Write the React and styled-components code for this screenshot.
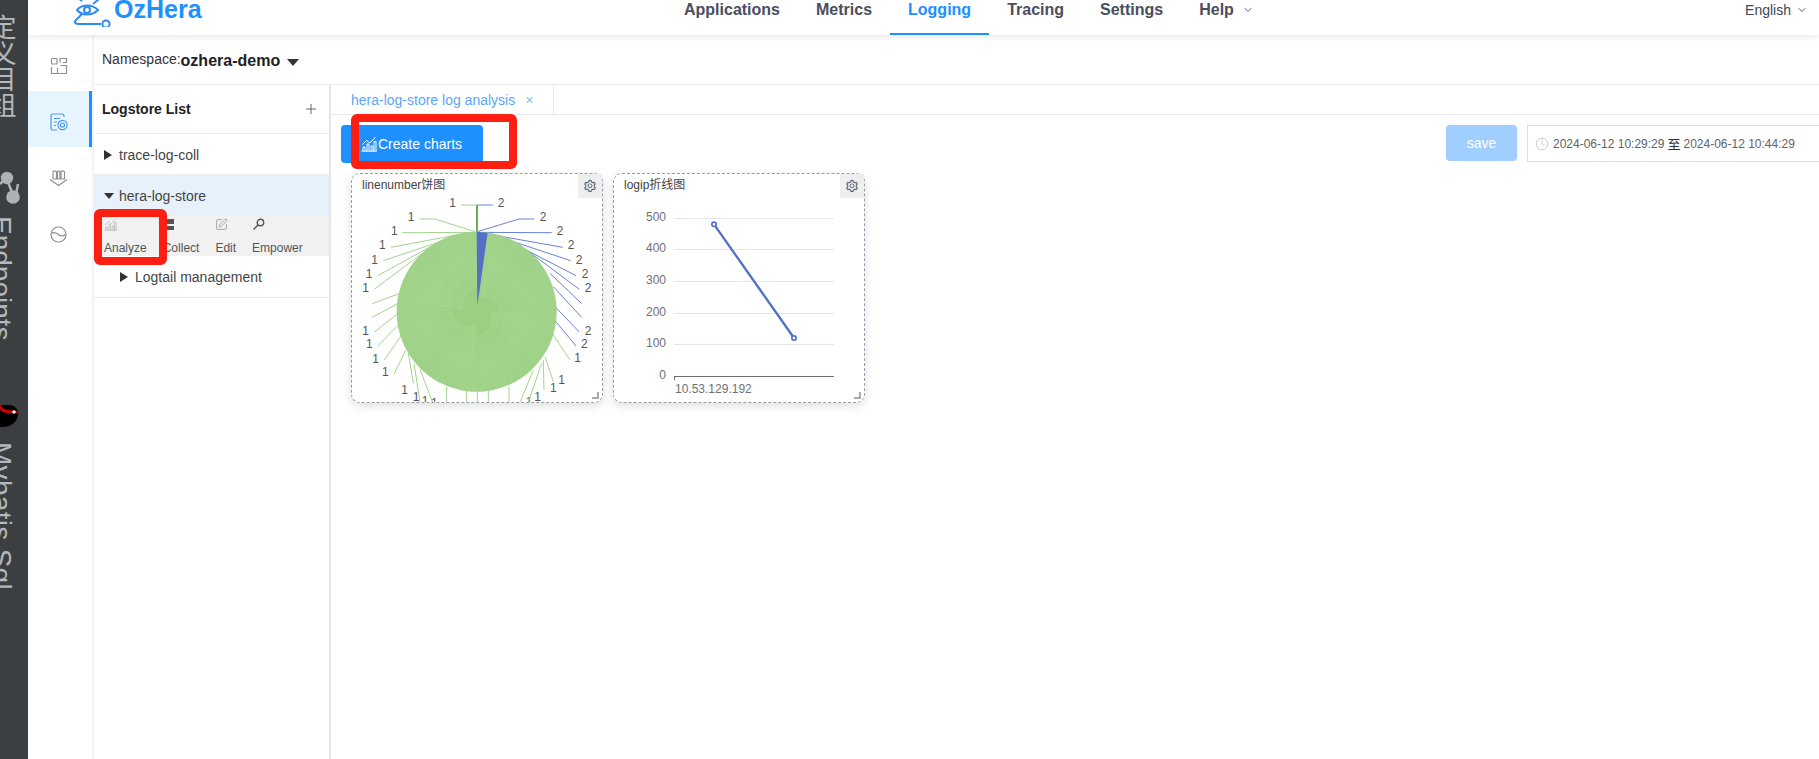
import styled, { createGlobalStyle } from "styled-components";
import { ChevronDown, Clock, Plus, SquarePen } from "lucide-react";
import { AiOutlineSetting } from "react-icons/ai";

const GlobalStyle = createGlobalStyle`
  html, body {
    margin: 0;
    height: 100%;
    overflow: hidden;
    background: #fff;
    font-family: "Liberation Sans", "Noto Sans CJK SC", sans-serif;
  }
`;

const Page = styled.div`
  display: flex;
  width: 1819px;
  height: 759px;
  overflow: hidden;
`;

const Strip = styled.div`
  flex: 0 0 28px;
  display: flex;
  flex-direction: column;
  align-items: flex-start;
  background: #3c3f41;
  overflow: hidden;
`;

const StripLabel = styled.div`
  writing-mode: vertical-rl;
  white-space: nowrap;
  font-size: ${(p) => p.$size || 28}px;
  letter-spacing: ${(p) => p.$spacing || 0}px;
  line-height: 28px;
  height: ${(p) => p.$height}px;
  margin-left: -13px;
  margin-top: ${(p) => p.$top}px;
  color: #b4b8bb;
`;

const Main = styled.div`
  flex: 1;
  display: flex;
  flex-direction: column;
  min-width: 0;
`;

const Header = styled.header`
  flex: 0 0 35px;
  position: relative;
  z-index: 2;
  display: flex;
  align-items: flex-start;
  background: #fff;
  box-shadow: 0 2px 6px rgba(0, 0, 0, 0.09);
`;

const Logo = styled.div`
  flex: 0 0 638px;
  display: flex;
  padding-left: 46px;
  box-sizing: border-box;
  height: 35px;
  overflow: hidden;
`;

const LogoText = styled.span`
  font-size: 25px;
  line-height: 19px;
  font-weight: 700;
  color: #1e90ff;
`;

const Nav = styled.nav`
  display: flex;
`;

const NavItem = styled.a`
  display: flex;
  align-items: flex-start;
  gap: 8px;
  height: 35px;
  box-sizing: border-box;
  padding: 0 18px;
  font-size: 16px;
  line-height: 19px;
  font-weight: 700;
  color: ${(p) => (p.$active ? "#1e90ff" : "#4a4e5e")};
  border-bottom: 2px solid ${(p) => (p.$active ? "#1e90ff" : "transparent")};
  svg {
    margin-top: 4px;
  }
`;

const Lang = styled.div`
  margin-left: auto;
  display: flex;
  align-items: center;
  gap: 5px;
  height: 20px;
  padding-right: 11px;
  font-size: 14px;
  color: #3f4656;
`;

const Body = styled.div`
  flex: 1;
  display: flex;
  min-height: 0;
`;

const Rail = styled.aside`
  flex: 0 0 66px;
  box-sizing: border-box;
  border-right: 2px solid #f3f3f3;
`;

const RailItem = styled.div`
  height: 56px;
  box-sizing: border-box;
  padding-top: 6px;
  display: flex;
  align-items: center;
  justify-content: center;
  background: ${(p) => (p.$active ? "#e6f5ff" : "transparent")};
  border-right: 3px solid ${(p) => (p.$active ? "#1e90ff" : "transparent")};
`;

const Content = styled.div`
  flex: 1;
  display: flex;
  flex-direction: column;
  min-width: 0;
`;

const NamespaceBar = styled.div`
  flex: 0 0 50px;
  box-sizing: border-box;
  display: flex;
  align-items: center;
  padding: 3px 0 0 8px;
  border-bottom: 1px solid #e8e8ee;
`;

const NamespaceLabel = styled.span`
  font-size: 14px;
  color: #333;
  margin-top: -4px;
`;

const NamespaceValue = styled.span`
  font-size: 16px;
  font-weight: 700;
  color: #222;
`;

const Caret = styled.i`
  display: inline-block;
  width: 0;
  height: 0;
  ${(p) =>
    p.$open
      ? `
    margin-right: -2px;
    border-left: ${p.$size}px solid transparent;
    border-right: ${p.$size}px solid transparent;
    border-top: ${p.$size + 1}px solid #333;
  `
      : `
    border-top: ${p.$size}px solid transparent;
    border-bottom: ${p.$size}px solid transparent;
    border-left: ${p.$size + 3}px solid #333;
  `}
`;

const NamespaceCaret = styled(Caret)`
  margin: 3px 0 0 7px;
`;

const Columns = styled.div`
  flex: 1;
  display: flex;
  min-height: 0;
`;

const ListPane = styled.section`
  flex: 0 0 237px;
  box-sizing: border-box;
  border-right: 2px solid #e6e6e6;
`;

const ListHead = styled.div`
  height: 49px;
  box-sizing: border-box;
  padding: 0 10px 0 8px;
  display: flex;
  align-items: center;
  justify-content: space-between;
  border-bottom: 1px solid #ececec;
  font-size: 14px;
  font-weight: 700;
  color: #222;
`;

const Row = styled.div`
  height: ${(p) => p.$height || 41}px;
  box-sizing: border-box;
  display: flex;
  align-items: center;
  gap: 7px;
  padding: ${(p) => (p.$height === 42 ? 0 : 2)}px 0 0 ${(p) => p.$indent || 10}px;
  font-size: 14px;
  color: #444;
  background: ${(p) => (p.$active ? "#e6f1fb" : "transparent")};
  border-bottom: 1px solid ${(p) => (p.$line ? "#ececec" : "transparent")};
`;

const Actions = styled.div`
  height: 41px;
  display: flex;
  gap: 16px;
  padding-left: 10px;
  background: #f1f1f1;
`;

const Action = styled.div`
  position: relative;
  display: flex;
  flex-direction: column;
  justify-content: space-between;
  padding: 3px 0 1px;
  box-sizing: border-box;
  height: 41px;
  font-size: 12px;
  line-height: 14px;
  color: #555;
  svg {
    display: block;
  }
`;

const RedMark = styled.div`
  position: absolute;
  z-index: 3;
  box-sizing: border-box;
  border: 8px solid #fe1e12;
  border-radius: 6px;
  left: ${(p) => p.$left}px;
  top: ${(p) => p.$top}px;
  width: ${(p) => p.$width}px;
  height: ${(p) => p.$height}px;
`;

const AnalysisPane = styled.section`
  flex: 1;
  display: flex;
  flex-direction: column;
  min-width: 0;
`;

const TabBar = styled.div`
  flex: 0 0 30px;
  box-sizing: border-box;
  display: flex;
  border-bottom: 1px solid #e4e7ed;
`;

const Tab = styled.div`
  width: 223px;
  height: 29px;
  box-sizing: border-box;
  display: flex;
  align-items: center;
  gap: 10px;
  padding-left: 20px;
  font-size: 14px;
  color: #5ea6f5;
  background: #fff;
  border-right: 1px solid #e4e7ed;
`;

const TabClose = styled.span`
  font-size: 14px;
  color: #8ab8ee;
`;

const Toolbar = styled.div`
  display: flex;
  align-items: flex-start;
  padding: 10px 0 0 10px;
`;

const CreateButton = styled.button`
  position: relative;
  width: 142px;
  height: 38px;
  padding: 0 0 0 20px;
  display: flex;
  align-items: center;
  gap: 1px;
  border: 0;
  border-radius: 4px;
  background: #1e90ff;
  color: #fff;
  font: 14px "Liberation Sans", sans-serif;
`;

const SaveButton = styled.button`
  margin-left: auto;
  width: 71px;
  height: 36px;
  border: 0;
  border-radius: 4px;
  background: #a0cfff;
  color: #fff;
  font: 14px "Liberation Sans", sans-serif;
`;

const DateBox = styled.div`
  margin-left: 10px;
  width: 292px;
  height: 37px;
  flex: none;
  box-sizing: border-box;
  display: flex;
  align-items: center;
  gap: 4px;
  padding-left: 7px;
  border: 1px solid #dcdfe6;
  border-right: 0;
  font-size: 12px;
  color: #606266;
  svg {
    color: #b4b8c0;
  }
`;

const DateSep = styled.span`
  color: #303133;
  font-size: 13px;
  margin: 0 -1px;
`;

const Cards = styled.div`
  display: flex;
  gap: 10px;
  padding: 10px 0 0 20px;
`;

const Card = styled.div`
  position: relative;
  width: 252px;
  height: 230px;
  box-sizing: border-box;
  border: 1px dashed #9a9aac;
  border-radius: 9px;
  background: #fff;
  box-shadow: 0 3px 10px rgba(0, 0, 0, 0.13);
`;

const CardTitle = styled.div`
  height: 23px;
  padding-left: 10px;
  font-size: 12px;
  line-height: 22px;
  color: #444;
`;

const GearBox = styled.div`
  position: absolute;
  top: 0;
  right: 0;
  width: 24px;
  height: 24px;
  display: flex;
  align-items: center;
  justify-content: center;
  background: #eee;
  color: #4d5a6c;
`;

const ResizeHandle = styled.div`
  position: absolute;
  right: 3px;
  bottom: 3px;
  width: 5px;
  height: 5px;
  border-right: 2px solid #aaa;
  border-bottom: 2px solid #aaa;
`;

const ChartSvg = styled.svg`
  display: block;
  width: 250px;
  height: 205px;
  overflow: hidden;
  text {
    font-family: "Liberation Sans", sans-serif;
    font-size: 36px;
  }
`;

const navItems = ["Applications", "Metrics", "Logging", "Tracing", "Settings"];

// leader lines of the pie, [points, label x, label y, label]
const greenLeaders = [
  ["410,215 410,135 363,135", 338, 130, "1"],
  ["405,215 285,177 238,177", 213, 172, "1"],
  ["400,217 233,218 187,218", 163, 214, "1"],
  ["365,222 153,262", 127, 256, "1"],
  ["330,235 130,302", 104, 300, "1"],
  ["290,250 113,347", 87, 343, "1"],
  ["260,270 103,388", 77, 385, "1"],
  ["180,400 97,431"],
  ["175,430 97,472"],
  ["175,460 103,516", 77, 512, "1"],
  ["180,490 113,558", 88, 553, "1"],
  ["185,525 133,600", 107, 596, "1"],
  ["197,570 162,643", 136, 637, "1"],
  ["205,580 220,670", 194, 690, "1"],
  ["222,610 240,727", 228, 712, "1"],
  ["240,628 278,728", 255, 722, "1"],
  ["320,680 320,727", 283, 728, "1"],
  ["380,690 380,727"],
  ["412,690 412,727"],
  ["445,690 445,727"],
  ["507,680 507,727"],
  ["580,630 540,727", 567, 725, "1"],
  ["605,610 565,727", 593, 712, "1"],
  ["610,600 612,690", 640, 685, "1"],
  ["615,590 640,665", 665, 660, "1"],
  ["640,525 690,600", 713, 595, "1"],
];

const blueLeaders = [
  ["412,215 412,135 458,135", 483, 130, "2"],
  ["412,215 537,177 583,177", 609, 172, "2"],
  ["415,217 590,218 635,218", 660, 214, "2"],
  ["460,225 668,262", 693, 256, "2"],
  ["490,235 692,302", 717, 300, "2"],
  ["530,255 708,347", 735, 343, "2"],
  ["560,270 718,388", 744, 385, "2"],
  ["630,340 725,431"],
  ["640,380 725,472"],
  ["645,440 718,516", 744, 512, "2"],
  ["648,485 708,558", 733, 553, "2"],
];

// hundreds of tiny slices, their borders give the moire look of the original
const sliceLines = Array.from({ length: 420 }, (_, i) => {
  const a = (i / 420) * Math.PI * 2;
  const c = Math.cos(a);
  const s = Math.sin(a);
  const inner = 40 + ((i * 37) % 110);
  const from = `${(410 + c * inner).toFixed(1)} ${(455 + s * inner).toFixed(1)}`;
  const to = `${(410 + c * 240).toFixed(1)} ${(455 + s * 240).toFixed(1)}`;
  return `M${from}L${to}`;
}).join("");

const yTicks = [
  ["500", 175.5],
  ["400", 268.5],
  ["300", 364.5],
  ["200", 460.5],
  ["100", 553.5],
];

function PieChart() {
  const leader = (list, color) =>
    list.map(([points, x, y, label]) => (
      <g key={points}>
        <polyline points={points} fill="none" stroke={color} strokeWidth="3" />
        {label && (
          <text x={x} y={y} textAnchor="middle" dominantBaseline="central" fill="#555">
            {label}
          </text>
        )}
      </g>
    ));
  return (
    <ChartSvg viewBox="36 111 750 615">
      {leader(greenLeaders, "#a2d48c")}
      {leader(blueLeaders, "#6882d4")}
      <circle cx="410" cy="455" r="240" fill="#9ccf83" />
      <path d={sliceLines} stroke="#b2dc9f" strokeWidth="1.6" strokeOpacity="0.5" fill="none" shapeRendering="crispEdges" />
      <polygon points="410,215 443,218 412,437" fill="#5470c6" />
      <line x1="410" y1="135" x2="410" y2="215" stroke="#5da33e" strokeWidth="3" />
    </ChartSvg>
  );
}

function LineChart() {
  return (
    <ChartSvg viewBox="42 111 750 615">
      {yTicks.map(([label, y]) => (
        <g key={label}>
          <line x1="222" y1={y} x2="702" y2={y} stroke="#e0e6f1" strokeWidth="3" />
          <text x="198" y={y - 4} textAnchor="end" dominantBaseline="central" fill="#6e7079">
            {label}
          </text>
        </g>
      ))}
      <text x="198" y="644" textAnchor="end" dominantBaseline="central" fill="#6e7079">
        0
      </text>
      <path d="M222 649.5H702M223.5 649V661" stroke="#6e7079" strokeWidth="3" fill="none" />
      <text x="225" y="686" dominantBaseline="central" fill="#6e7079">
        10.53.129.192
      </text>
      <line x1="342" y1="193" x2="582" y2="534" stroke="#5470c6" strokeWidth="7" />
      <circle cx="342" cy="193" r="6.5" fill="#fff" stroke="#5470c6" strokeWidth="5" />
      <circle cx="582" cy="534" r="6.5" fill="#fff" stroke="#5470c6" strokeWidth="5" />
    </ChartSvg>
  );
}

function ChartIcon({ color, size }) {
  return (
    <svg width={size} height={size} viewBox="0 0 16 16" fill="none" stroke={color} strokeWidth="1">
      <path d="M0.5 15.2H15.8" />
      <path d="M1.5 8.5L5.5 4.5L9 7L14.5 1" />
      <path d="M2 15V11H4V15M6 15V8H8V15M10 15V10H12V15M13 15V5.5H15V15" />
    </svg>
  );
}

function App() {
  return (
    <>
      <GlobalStyle />
      <Page>
        <Strip>
          <StripLabel $top={14} $height={104} $size={26} lang="zh">
            定义目组
          </StripLabel>
          <svg width="20" height="38" viewBox="0 0 20 36" style={{ marginTop: 52, flex: "none" }}>
            <circle cx="7" cy="7" r="6.2" fill="#aeb2b5" />
            <circle cx="13" cy="26" r="6.8" fill="#aeb2b5" />
            <path d="M0 13L4 9M8 11L13 24M18 13L16 23" stroke="#aeb2b5" strokeWidth="2.5" />
          </svg>
          <StripLabel $top={8} $height={130}>
            Endpoints
          </StripLabel>
          <svg width="18" height="26" viewBox="0 0 18 26" style={{ marginTop: 57, flex: "none" }}>
            <path d="M0 3C10 0 18 3 18 11C18 19 10 25 0 24Z" fill="#000" />
            <path d="M0 0C1 6 4 7 17 8L17 10C8 11 1 10 0 6Z" fill="#c00" />
            <circle cx="14" cy="9" r="1.8" fill="#eee" />
          </svg>
          <StripLabel $top={13} $height={150} $spacing={0.3}>
            Mybatis Sql
          </StripLabel>
        </Strip>
        <Main>
          <Header>
            <Logo>
              <svg width="40" height="27" viewBox="0 0 40 27" fill="none" stroke="#2b8cf5" strokeWidth="2" style={{ flex: "none" }}>
                <path d="M4 -2L8 1" />
                <path d="M3 10C8 4 18 4 24 10C18 16 8 16 3 10Z" />
                <circle cx="13" cy="10" r="3" />
                <path d="M25 -1L19 4" />
                <path d="M8 14L2 20C0 22 1 24 4 24H27" />
                <circle cx="32" cy="24" r="3.6" />
              </svg>
              <LogoText>OzHera</LogoText>
            </Logo>
            <Nav>
              {navItems.map((item) => (
                <NavItem key={item} $active={item === "Logging"}>
                  {item}
                </NavItem>
              ))}
              <NavItem>
                Help
                <ChevronDown size={12} strokeWidth={1.8} />
              </NavItem>
            </Nav>
            <Lang>
              English
              <ChevronDown size={12} strokeWidth={1.8} />
            </Lang>
          </Header>
          <Body>
            <Rail>
              <RailItem>
                <svg width="18" height="18" viewBox="0 0 18 18" fill="none" stroke="#8f8f96" strokeWidth="1.2">
                  <rect x="1.5" y="1.5" width="5.5" height="5.5" rx="0.8" />
                  <path d="M10 5.5V1.5H16.5V5.5H13" />
                  <path d="M1.5 10V16.5H7" />
                  <path d="M10.5 8.5H16.5V16.5H7.5V11" />
                </svg>
              </RailItem>
              <RailItem $active>
                <svg width="18" height="18" viewBox="0 0 18 18" fill="none" stroke="#4b97f5" strokeWidth="1.2">
                  <path d="M14 4V2.5C14 1.5 13.5 1 12.5 1H2.5C1.5 1 1 1.5 1 2.5V15.5C1 16.5 1.5 17 2.5 17H7" />
                  <path d="M4 5.5H10M4 9H7M4 12.5H6" />
                  <circle cx="12.5" cy="12" r="4.6" />
                  <circle cx="12.5" cy="12" r="2" />
                </svg>
              </RailItem>
              <RailItem>
                <svg width="19" height="18" viewBox="0 0 19 18" fill="none" stroke="#8f8f96" strokeWidth="1.2">
                  <path d="M4 10V3C4 1.5 7.5 1.5 7.5 3V10ZM8.5 10V3C8.5 1.5 11 1.5 11 3V10ZM12 10V3C12 1.5 15.5 1.5 15.5 3V10Z" />
                  <path d="M1 10.5L9.5 16.5L18 10.5" />
                </svg>
              </RailItem>
              <RailItem>
                <svg width="17" height="17" viewBox="0 0 17 17" fill="none" stroke="#8f8f96" strokeWidth="1.2">
                  <circle cx="8.5" cy="8.5" r="7.5" />
                  <path d="M1.5 7.5C4 5.5 6 6.5 8.5 8.5C11 10.5 13 10.5 15.5 8.5" />
                </svg>
              </RailItem>
            </Rail>
            <Content>
              <NamespaceBar>
                <NamespaceLabel>Namespace:</NamespaceLabel>
                <NamespaceValue>ozhera-demo</NamespaceValue>
                <NamespaceCaret $open $size={6} />
              </NamespaceBar>
              <Columns>
                <ListPane>
                  <ListHead>
                    Logstore List
                    <Plus size={16} strokeWidth={1.2} color="#444" />
                  </ListHead>
                  <Row $line>
                    <Caret $size={5} />
                    trace-log-coll
                  </Row>
                  <Row $active $height={40}>
                    <Caret $open $size={5} />
                    hera-log-store
                  </Row>
                  <Actions>
                    <Action>
                      <ChartIcon color="#bbb" size={13} />
                      Analyze
                      <RedMark $left={-10} $top={-6} $width={73} $height={56} />
                    </Action>
                    <Action>
                      <svg width="13" height="13" viewBox="0 0 13 13" fill="#555">
                        <rect x="2" y="1" width="9" height="5" />
                        <rect x="2" y="8" width="9" height="4" />
                      </svg>
                      Collect
                    </Action>
                    <Action>
                      <SquarePen size={13} strokeWidth={1} color="#666" />
                      Edit
                    </Action>
                    <Action>
                      <svg width="13" height="13" viewBox="0 0 13 13" fill="none" stroke="#555" strokeWidth="1.4">
                        <circle cx="8.5" cy="4.5" r="3.2" />
                        <path d="M6 7L1.5 11.5" />
                      </svg>
                      Empower
                    </Action>
                  </Actions>
                  <Row $line $indent={26} $height={42}>
                    <Caret $size={5} />
                    Logtail management
                  </Row>
                </ListPane>
                <AnalysisPane>
                  <TabBar>
                    <Tab>
                      hera-log-store log analysis
                      <TabClose>×</TabClose>
                    </Tab>
                  </TabBar>
                  <Toolbar>
                    <CreateButton>
                      <ChartIcon color="#fff" size={16} />
                      Create charts
                      <RedMark $left={10} $top={-11} $width={166} $height={55} />
                    </CreateButton>
                    <SaveButton>save</SaveButton>
                    <DateBox>
                      <Clock size={14} strokeWidth={1.2} />
                      2024-06-12 10:29:29
                      <DateSep>至</DateSep>
                      2024-06-12 10:44:29
                    </DateBox>
                  </Toolbar>
                  <Cards>
                    <Card>
                      <CardTitle>linenumber饼图</CardTitle>
                      <GearBox>
                        <AiOutlineSetting size={14} />
                      </GearBox>
                      <PieChart />
                      <ResizeHandle />
                    </Card>
                    <Card>
                      <CardTitle>logip折线图</CardTitle>
                      <GearBox>
                        <AiOutlineSetting size={14} />
                      </GearBox>
                      <LineChart />
                      <ResizeHandle />
                    </Card>
                  </Cards>
                </AnalysisPane>
              </Columns>
            </Content>
          </Body>
        </Main>
      </Page>
    </>
  );
}

export default App;
